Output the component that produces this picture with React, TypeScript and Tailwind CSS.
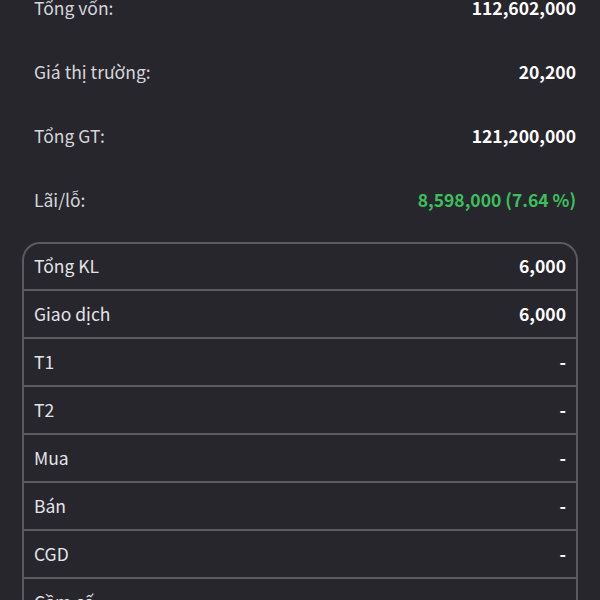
import React from "react";

const top = [
  { l: "Tổng vốn:", v: "112,602,000" },
  { l: "Giá thị trường:", v: "20,200" },
  { l: "Tổng GT:", v: "121,200,000" },
  { l: "Lãi/lỗ:", v: "8,598,000 (7.64 %)", green: true },
];

const rows = [
  { l: "Tổng KL", v: "6,000" },
  { l: "Giao dịch", v: "6,000" },
  { l: "T1", v: "-" },
  { l: "T2", v: "-" },
  { l: "Mua", v: "-" },
  { l: "Bán", v: "-" },
  { l: "CGD", v: "-" },
  { l: "Cầm cố", v: "-" },
  { l: "Phong tỏa", v: "-" },
];

export default function App() {
  return (
    <div
      className="w-[600px] h-[600px] overflow-hidden bg-[#27262c] text-[17.5px]"
      style={{ fontFamily: '"Noto Sans CJK SC", "Noto Sans", sans-serif' }}
    >
      <div className="-mt-[24px] px-[24px]">
        {top.map((r) => (
          <div key={r.l} className="h-16 flex items-center justify-between pl-[10px]">
            <span className="text-[#d6d6da]">{r.l}</span>
            <span className={`font-bold ${r.green ? "text-[#3cc05c]" : "text-white"}`}>{r.v}</span>
          </div>
        ))}
      </div>
      <div className="mt-[10px] mx-[22px] w-[556px] border-2 border-[#5a5a60] rounded-[18px]">
        {rows.map((r, i) => (
          <div
            key={r.l}
            className={`flex items-center justify-between px-[10px] ${i > 0 ? "border-t-2 border-[#5a5a60] h-[48px]" : "h-[45px]"}`}
          >
            <span className="text-[#e4e4e8]">{r.l}</span>
            <span className="font-bold text-white">{r.v}</span>
          </div>
        ))}
      </div>
    </div>
  );
}
